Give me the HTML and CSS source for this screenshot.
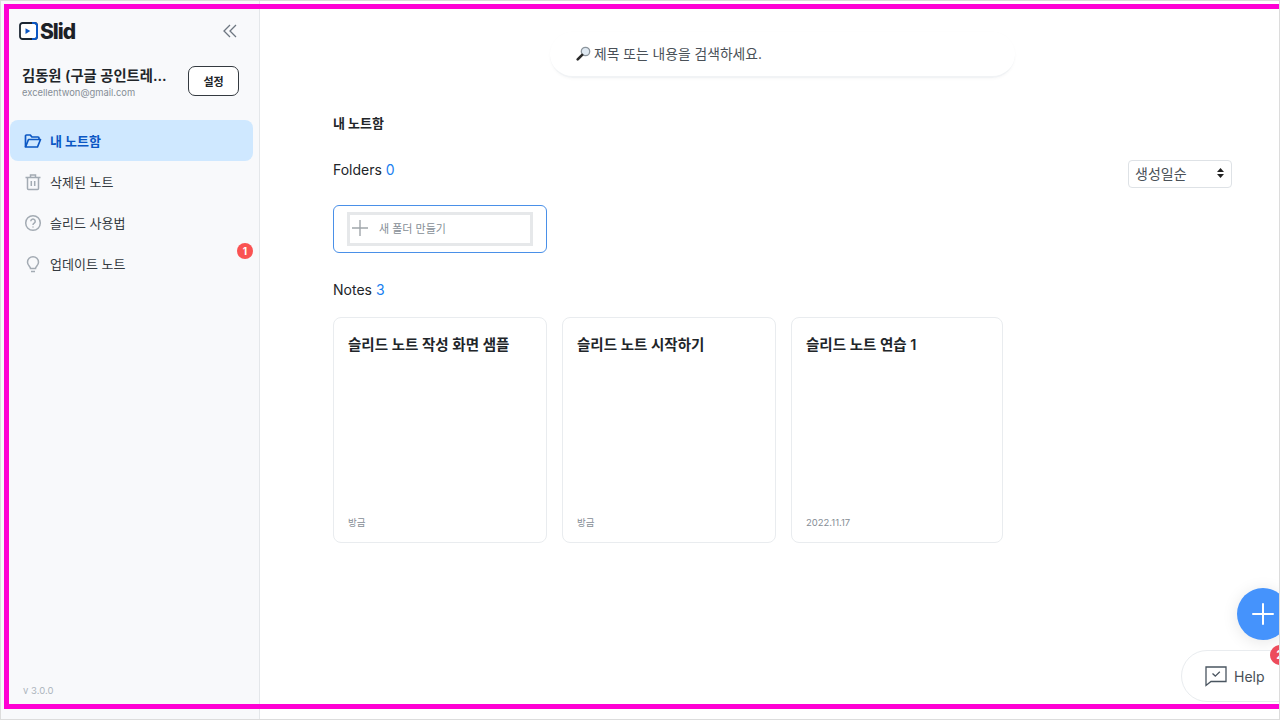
FILE: index.html
```html
<!DOCTYPE html>
<html lang="ko">
<head>
    <meta charset="UTF-8">
    <title>Slid</title>
    <link rel="stylesheet" href="styles.css">
</head>
<body>
    <div class="screen">
        <aside class="sidebar">
            <div class="side-top">
                <div class="logo">
                    <svg class="logo-icon" width="19" height="18" viewBox="0 0 19 18">
                        <rect x="1" y="1" width="17" height="16" rx="2.5" fill="#fff" stroke="#1c2733" stroke-width="1.8"/>
                        <path d="M13 1h2.500a2.500 2.500 0 0 1 2.500 2.500v11a2.500 2.500 0 0 1-2.500 2.500H13" fill="none" stroke="#0b57c4" stroke-width="2"/>
                        <path d="M6.500 6.200l4.800 2.900-4.800 2.900z" fill="#0b57c4"/>
                    </svg>
                    <span class="logo-text">Slid</span>
                </div>
                <svg class="collapse" width="14" height="14" viewBox="0 0 14 14" fill="none" stroke="#6d7680" stroke-width="1.3">
                    <path d="M7 1L1 7l6 6"/>
                    <path d="M13 1L7 7l6 6"/>
                </svg>
            </div>
            <div class="user">
                <div class="user-info">
                    <div class="user-name">김동원 (구글 공인트레...</div>
                    <div class="user-mail">excellentwon@gmail.com</div>
                </div>
                <button class="setting-btn">설정</button>
            </div>
            <nav class="menu">
                <div class="menu-item active">
                    <svg width="18" height="18" viewBox="0 0 18 18" fill="none" stroke="#0b57c4" stroke-width="1.7" stroke-linejoin="round">
                        <path d="M1.500 15V4a1 1 0 0 1 1-1h3.800l1.600 2H14a1 1 0 0 1 1 1v1.500"/>
                        <path d="M1.500 15h12l3-7.500H4.500z"/>
                    </svg>
                    <span>내 노트함</span>
                </div>
                <div class="menu-item">
                    <svg width="18" height="18" viewBox="0 0 18 18" fill="none" stroke="#a3abb3" stroke-width="1.5">
                        <path d="M1.500 4.500h15"/>
                        <path d="M6.500 4.500V2h5v2.500"/>
                        <path d="M3.500 4.500v11a1 1 0 0 0 1 1h9a1 1 0 0 0 1-1v-11"/>
                        <path d="M7.300 8v5M10.700 8v5"/>
                    </svg>
                    <span>삭제된 노트</span>
                </div>
                <div class="menu-item">
                    <svg width="18" height="18" viewBox="0 0 18 18" fill="none" stroke="#a3abb3" stroke-width="1.5">
                        <circle cx="9" cy="9" r="7.300"/>
                        <path d="M6.800 7.200a2.200 2.200 0 1 1 3.400 1.900c-.8.500-1.200 1-1.200 1.900"/>
                        <path d="M9 12.400v1.200"/>
                    </svg>
                    <span>슬리드 사용법</span>
                </div>
                <div class="menu-item">
                    <svg width="18" height="18" viewBox="0 0 18 18" fill="none" stroke="#a3abb3" stroke-width="1.500">
                        <path d="M6.500 13.500c0-1.800-3-3-3-6.300a5.500 5.500 0 0 1 11 0c0 3.300-3 4.500-3 6.300z"/>
                        <path d="M7 16.500h4"/>
                    </svg>
                    <span>업데이트 노트</span>
                    <span class="menu-badge">1</span>
                </div>
            </nav>
            <div class="version">v 3.0.0</div>
        </aside>

        <main class="main">
            <div class="search">
                <svg width="15" height="15" viewBox="0 0 15 15">
                    <circle cx="9.500" cy="5.500" r="4.200" fill="#dfe9f2" stroke="#8b949c" stroke-width="1.300"/>
                    <path d="M6.200 8.800L1.700 13.300" stroke="#2a2a2a" stroke-width="2.600" stroke-linecap="round"/>
                </svg>
                <span>제목 또는 내용을 검색하세요.</span>
            </div>

            <h2 class="page-title">내 노트함</h2>

            <div class="section-head">
                <div class="section-name">Folders <span class="count">0</span></div>
                <div class="sort-select">
                    <span>생성일순</span>
                    <svg width="7" height="10" viewBox="0 0 7 10" fill="#222">
                        <path d="M3.500 0L7 4H0z"/>
                        <path d="M3.500 10L0 6h7z"/>
                    </svg>
                </div>
            </div>

            <div class="new-folder">
                <div class="new-folder-inner">
                    <svg width="16" height="16" viewBox="0 0 16 16" stroke="#a0a6ab" stroke-width="1.400">
                        <path d="M8 0v16M0 8h16"/>
                    </svg>
                    <span>새 폴더 만들기</span>
                </div>
            </div>

            <div class="section-name notes-name">Notes <span class="count">3</span></div>

            <div class="note-list">
                <div class="note-card">
                    <div class="note-title">슬리드 노트 작성 화면 샘플</div>
                    <div class="note-date">방금</div>
                </div>
                <div class="note-card">
                    <div class="note-title">슬리드 노트 시작하기</div>
                    <div class="note-date">방금</div>
                </div>
                <div class="note-card">
                    <div class="note-title">슬리드 노트 연습 1</div>
                    <div class="note-date">2022.11.17</div>
                </div>
            </div>
        </main>

        <button class="fab">
            <svg width="22" height="22" viewBox="0 0 22 22" stroke="#fff" stroke-width="2" stroke-linecap="round">
                <path d="M11 1v20M1 11h20"/>
            </svg>
        </button>

        <div class="help">
            <svg width="22" height="22" viewBox="0 0 22 22" fill="none" stroke="#4a5560" stroke-width="1.300">
                <path d="M1 2h20v14.500H6L1 20.500z"/>
                <path d="M7.500 8.500l2.800 2.600 4.500-4.300"/>
            </svg>
            <span>Help</span>
            <span class="help-badge">2</span>
        </div>

        <div class="frame"></div>
    </div>
</body>
</html>
```

FILE: styles.css
```css
* {
    box-sizing: border-box;
}
body {
    margin: 0;
    font-family: Inter, "Noto Sans CJK KR", sans-serif;
    color: #212529;
    background-color: #fff;
}
.screen {
    position: relative;
    display: flex;
    width: 1280px;
    height: 720px;
    border: 1px solid #dcdcdc;
    overflow: hidden;
}

/* sidebar */
.sidebar {
    display: flex;
    flex-direction: column;
    width: 259px;
    flex-shrink: 0;
    background-color: #f8f9fb;
    border-right: 1px solid #e4e7ea;
}
.side-top {
    display: flex;
    justify-content: space-between;
    align-items: center;
    height: 20px;
    margin-top: 20px;
    padding: 0 22px 0 18px;
}
.logo {
    display: flex;
    align-items: center;
    gap: 2px;
}
.logo-text {
    font-size: 21px;
    font-weight: 800;
    letter-spacing: -1px;
    color: #1c2126;
}
.user {
    display: flex;
    justify-content: space-between;
    align-items: flex-start;
    margin-top: 25px;
    padding: 0 20px 0 21px;
}
.user-name {
    font-size: 14.300px;
    font-weight: 600;
    line-height: 20px;
}
.user-mail {
    font-size: 9.400px;
    line-height: 13px;
    color: #868e96;
}
.setting-btn {
    width: 51px;
    height: 30px;
    padding: 0;
    background-color: #fff;
    border: 1px solid #343a40;
    border-radius: 7px;
    font-family: inherit;
    font-size: 11px;
    font-weight: 600;
    color: #212529;
}
.menu {
    margin-top: 21px;
    padding: 0 6px 0 9px;
}
.menu-item {
    position: relative;
    display: flex;
    align-items: center;
    gap: 8px;
    height: 41px;
    padding-left: 14px;
    font-size: 13px;
    color: #343a40;
    border-radius: 8px;
}
.menu-item.active {
    background-color: #cfe8ff;
    color: #0b57c4;
    font-weight: 700;
}
.menu-badge {
    position: absolute;
    right: 0;
    top: 0;
    width: 16px;
    height: 16px;
    border-radius: 50%;
    background-color: #fa5252;
    color: #fff;
    font-size: 10px;
    font-weight: 700;
    line-height: 16px;
    text-align: center;
}
.version {
    margin-top: auto;
    padding: 0 0 23px 22px;
    font-size: 9.500px;
    color: #adb5bd;
}

/* main */
.main {
    width: 972px;
    padding: 31px 0 0 73px;
}
.search {
    display: flex;
    align-items: center;
    gap: 3px;
    width: 465px;
    height: 46px;
    margin-left: 217px;
    padding: 0 0 2px 26px;
    border-radius: 23px;
    border-bottom: 2px solid #f1f3f5;
    box-shadow: 0 1px 3px rgba(0, 0, 0, 0.03);
    font-size: 13.800px;
    color: #495057;
}
.page-title {
    margin: 36px 0 0;
    font-size: 13px;
    font-weight: 700;
    line-height: 18px;
}
.section-head {
    display: flex;
    justify-content: space-between;
    margin-top: 28px;
}
.section-name {
    font-size: 14px;
    line-height: 20px;
    color: #212529;
}
.count {
    color: #1a80f0;
}
.sort-select {
    display: flex;
    justify-content: space-between;
    align-items: center;
    width: 104px;
    height: 28px;
    padding: 0 7px 2px 6px;
    background-color: #fff;
    border: 1px solid #dee2e6;
    border-radius: 4px;
    font-size: 14px;
    color: #495057;
}
.new-folder {
    width: 214px;
    height: 48px;
    margin-top: 17px;
    padding: 6px 13px;
    border: 1px solid #4a90e8;
    border-radius: 6px;
}
.new-folder-inner {
    display: flex;
    align-items: center;
    gap: 11px;
    height: 34px;
    padding: 0 0 2px 2px;
    border: 3px solid #e6e8ea;
    font-size: 11px;
    color: #868e96;
}
.notes-name {
    margin-top: 27px;
}
.note-list {
    display: flex;
    gap: 15px;
    margin-top: 17px;
}
.note-card {
    display: flex;
    flex-direction: column;
    justify-content: space-between;
    width: 214px;
    height: 226px;
    padding: 17px 14px 13px;
    border: 1px solid #e9ecef;
    border-radius: 8px;
}
.note-card:last-child {
    width: 212px;
}
.note-title {
    font-size: 14.500px;
    font-weight: 600;
    line-height: 20px;
}
.note-date {
    font-size: 9.500px;
    line-height: 13px;
    color: #868e96;
}

/* floating stuff */
.fab {
    position: absolute;
    left: 1236px;
    top: 587px;
    width: 52px;
    height: 52px;
    padding: 15px;
    border: none;
    border-radius: 50%;
    background-color: #4593fc;
    box-shadow: 0 2px 16px rgba(0, 0, 0, 0.1);
}
.help {
    position: absolute;
    left: 1180px;
    top: 649px;
    display: flex;
    align-items: center;
    gap: 7px;
    width: 130px;
    height: 52px;
    padding-left: 23px;
    background-color: #fff;
    border: 1px solid #e9ecef;
    border-radius: 26px;
    font-size: 14px;
    color: #495057;
}
.help-badge {
    position: absolute;
    left: 88px;
    top: -6px;
    width: 20px;
    height: 20px;
    border-radius: 50%;
    background-color: #ed4c5c;
    color: #fff;
    font-size: 12px;
    font-weight: 700;
    line-height: 20px;
    text-align: center;
}
.frame {
    position: absolute;
    left: 3px;
    top: 3px;
    width: 1275px;
    height: 705px;
    border: solid #ff00d4;
    border-width: 5px 0 5px 5px;
    pointer-events: none;
}
```
